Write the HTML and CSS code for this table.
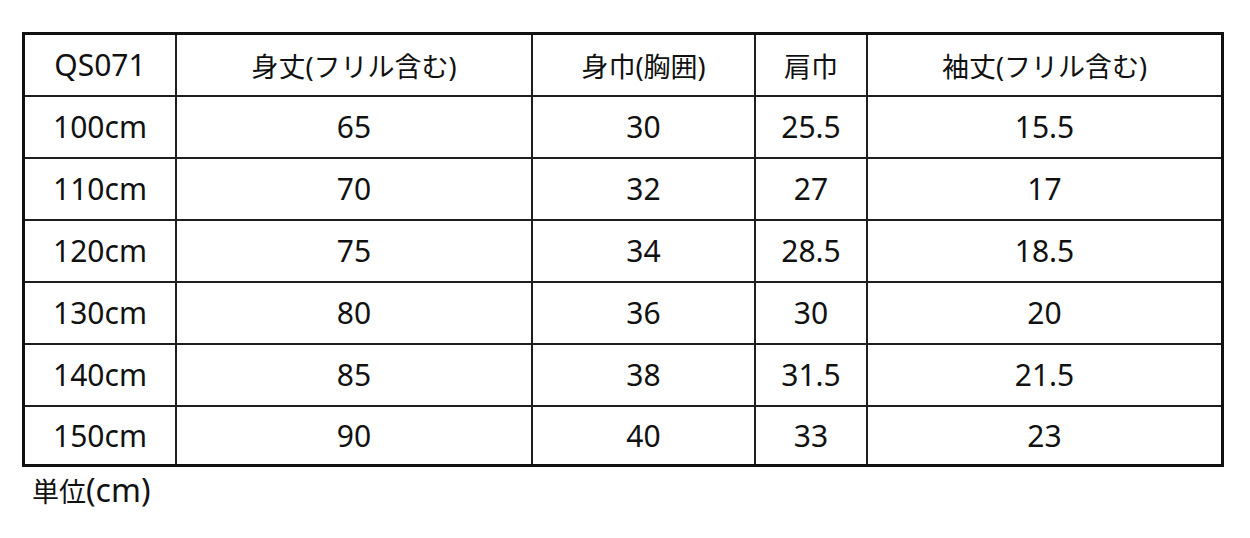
FILE: index.html
```html
<!DOCTYPE html>
<html lang="ja">
<head>
<meta charset="utf-8">
<title>サイズ表</title>
<link rel="stylesheet" href="styles.css">
</head>
<body>
<div class="page">
  <div class="size-table">
    <div class="cell head latin">QS071</div>
    <div class="cell head">身丈(フリル含む)</div>
    <div class="cell head">身巾(胸囲)</div>
    <div class="cell head">肩巾</div>
    <div class="cell head last-col">袖丈(フリル含む)</div>

    <div class="cell">100cm</div><div class="cell">65</div><div class="cell">30</div><div class="cell">25.5</div><div class="cell last-col">15.5</div>
    <div class="cell">110cm</div><div class="cell">70</div><div class="cell">32</div><div class="cell">27</div><div class="cell last-col">17</div>
    <div class="cell">120cm</div><div class="cell">75</div><div class="cell">34</div><div class="cell">28.5</div><div class="cell last-col">18.5</div>
    <div class="cell">130cm</div><div class="cell">80</div><div class="cell">36</div><div class="cell">30</div><div class="cell last-col">20</div>
    <div class="cell">140cm</div><div class="cell">85</div><div class="cell">38</div><div class="cell">31.5</div><div class="cell last-col">21.5</div>
    <div class="cell last-row">150cm</div><div class="cell last-row">90</div><div class="cell last-row">40</div><div class="cell last-row">33</div><div class="cell last-row last-col">23</div>
  </div>
  <div class="unit">単位<span class="unit-latin">(cm)</span></div>
</div>
</body>
</html>
```

FILE: styles.css
```css
html, body {
  margin: 0;
  padding: 0;
  background: #ffffff;
}

body {
  font-family: "Noto Sans", "Noto Sans CJK JP", sans-serif;
  color: #111111;
}

.page {
  padding: 32px 0 0 22px;
}

.size-table {
  display: grid;
  grid-template-columns: 152px 356px 223px 112px 353px;
  grid-template-rows: 62px 62px 62px 62px 62px 62px 57px;
  width: 1196px;
  border: 3px solid #111111;
}

.cell {
  box-sizing: border-box;
  display: flex;
  align-items: center;
  justify-content: center;
  border-right: 2px solid #1e1e1e;
  border-bottom: 2px solid #1e1e1e;
  font-size: 30px;
  line-height: 1;
}

.cell.head {
  font-size: 27px;
  padding-top: 2px;
}

.cell.head.latin {
  font-size: 30px;
  padding-top: 0;
}

.cell.last-col {
  border-right: none;
}

.cell.last-row {
  border-bottom: none;
}

.unit {
  margin-top: 7px;
  padding-left: 10px;
  font-size: 27px;
  line-height: 32px;
}

.unit-latin {
  font-size: 32px;
}
```
